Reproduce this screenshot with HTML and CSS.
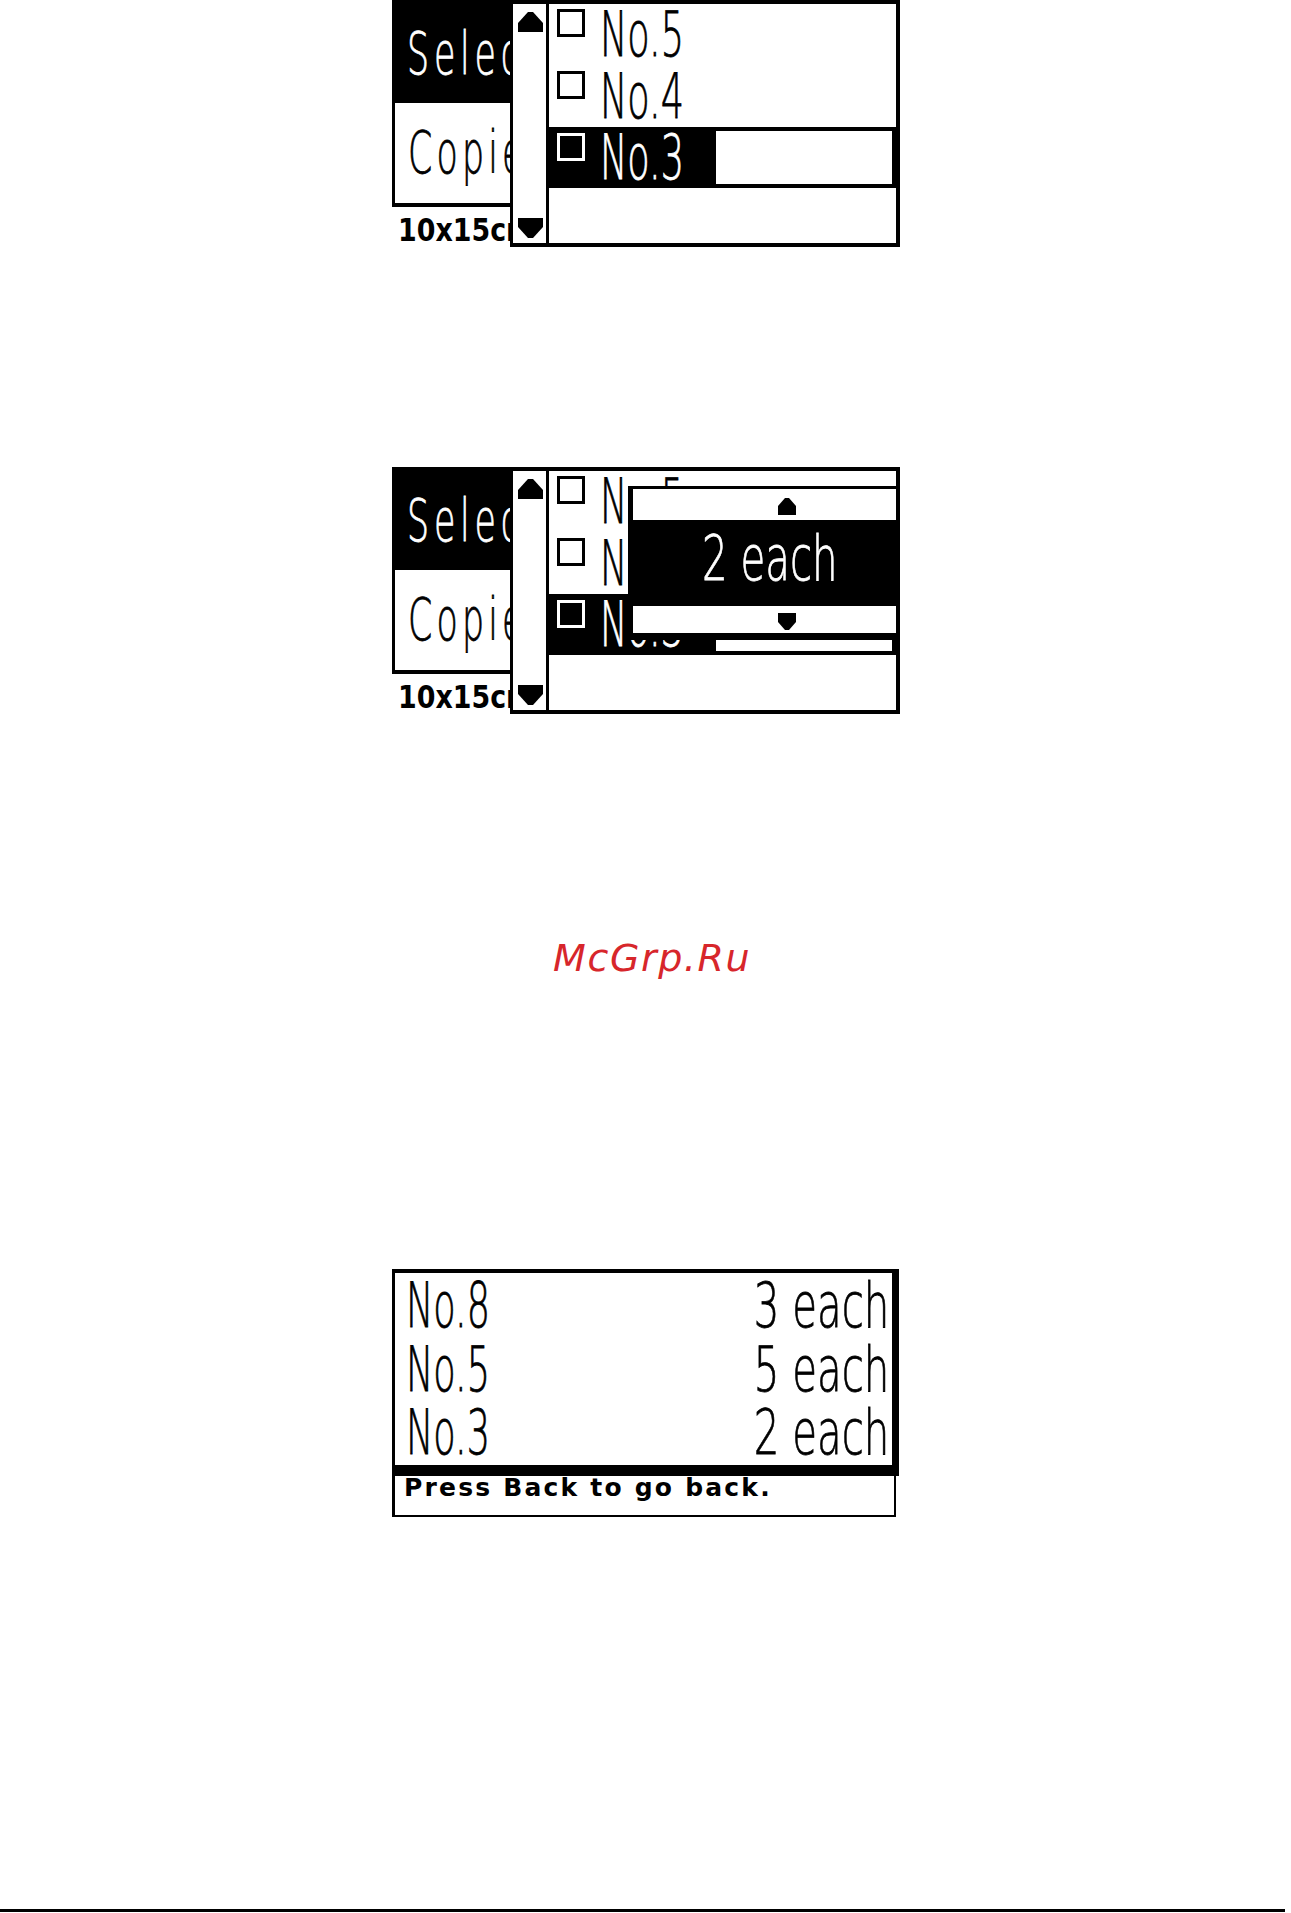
FILE: index.html
```html
<!DOCTYPE html>
<html lang="en">
<head>
<meta charset="utf-8">
<title>Copies per photo</title>
<link rel="stylesheet" href="styles.css">
</head>
<body>
<main class="page">

  <section class="screen">
    <div class="panel">
      <div class="panel-head"><span class="lcd lcd-side">Select</span></div>
      <div class="panel-box"><span class="lcd lcd-side lcd-copies">Copies</span></div>
      <div class="panel-foot"><span class="small-lcd">10x15cm</span></div>
    </div>
    <div class="menu">
      <div class="scroll">
        <svg class="arrow-lg" viewBox="0 0 25 20"><polygon points="10,0 15,0 25,11 25,20 0,20 0,11"/></svg>
        <svg class="arrow-lg" viewBox="0 0 25 20"><polygon points="0,0 25,0 25,9 15,20 10,20 0,9"/></svg>
      </div>
      <div class="list">
        <div class="group">
          <div class="row"><span class="check"></span><span class="name"><span class="lcd lcd-name">No.5</span></span></div>
          <div class="row"><span class="check"></span><span class="name"><span class="lcd lcd-name">No.4</span></span></div>
        </div>
        <div class="row row-selected"><span class="check"></span><span class="name"><span class="lcd lcd-name">No.3</span></span><span class="row-fill"></span></div>
        <div class="row-empty"></div>
      </div>
    </div>
  </section>

  <section class="screen">
    <div class="panel">
      <div class="panel-head"><span class="lcd lcd-side">Select</span></div>
      <div class="panel-box"><span class="lcd lcd-side lcd-copies">Copies</span></div>
      <div class="panel-foot"><span class="small-lcd">10x15cm</span></div>
    </div>
    <div class="menu">
      <div class="scroll">
        <svg class="arrow-lg" viewBox="0 0 25 20"><polygon points="10,0 15,0 25,11 25,20 0,20 0,11"/></svg>
        <svg class="arrow-lg" viewBox="0 0 25 20"><polygon points="0,0 25,0 25,9 15,20 10,20 0,9"/></svg>
      </div>
      <div class="list">
        <div class="group">
          <div class="row"><span class="check"></span><span class="name"><span class="lcd lcd-name">No.5</span></span></div>
          <div class="row"><span class="check"></span><span class="name"><span class="lcd lcd-name">No.4</span></span></div>
        </div>
        <div class="row row-selected"><span class="check"></span><span class="name"><span class="lcd lcd-name">No.3</span></span><span class="row-fill"></span></div>
        <div class="row-empty"></div>
      </div>
    </div>
    <div class="spinner">
      <div class="spin-up"><svg class="arrow-sm" viewBox="0 0 18 17"><polygon points="7,0 11,0 18,8 18,17 0,17 0,8"/></svg></div>
      <div class="spin-value"><span class="lcd lcd-qty-left">2 each</span></div>
      <div class="spin-down"><svg class="arrow-sm" viewBox="0 0 18 17"><polygon points="0,0 18,0 18,9 11,17 7,17 0,9"/></svg></div>
    </div>
  </section>

  <p class="watermark">McGrp.Ru</p>

  <section class="summary">
    <div class="summary-list">
      <div class="sum-row"><span class="lcd lcd-name">No.8</span><span class="lcd lcd-qty">3 each</span></div>
      <div class="sum-row"><span class="lcd lcd-name">No.5</span><span class="lcd lcd-qty">5 each</span></div>
      <div class="sum-row"><span class="lcd lcd-name">No.3</span><span class="lcd lcd-qty">2 each</span></div>
    </div>
    <div class="status">Press Back to go back.</div>
  </section>

  <hr class="page-rule">
</main>
</body>
</html>
```

FILE: styles.css
```css
* {
  box-sizing: border-box;
  margin: 0;
  padding: 0;
}

html, body {
  background: #fff;
}

body {
  width: 1291px;
  height: 1913px;
  overflow: hidden;
  font-family: "DejaVu Sans", sans-serif;
  color: #000;
}

.page {
  display: flex;
  flex-direction: column;
  height: 1913px;
}

/* ---------- LCD type (tall, condensed display lettering) ---------- */
.lcd {
  display: inline-block;
  font-weight: 200;
  line-height: 0.9;
  white-space: nowrap;
  transform-origin: left top;
  -webkit-text-stroke: 0.4px currentColor;
}

.lcd-side {
  font-size: 19.33px;
  letter-spacing: 2.67px;
  transform: scale(1.8, 3);
  -webkit-text-stroke: 0.27px currentColor;
}

.lcd-copies {
  letter-spacing: 2.33px;
}

.lcd-name {
  font-size: 31px;
  transform: scale(1.18, 2);
}

.lcd-qty,
.lcd-qty-left {
  font-size: 31px;
  transform: scale(1.3, 2);
}

.lcd-qty {
  transform-origin: right top;
}

.small-lcd {
  display: inline-block;
  font-size: 16px;
  font-weight: bold;
  line-height: 1;
  white-space: nowrap;
  transform: scale(1.68, 2);
  transform-origin: left top;
}

/* ---------- selection screens ---------- */
.screen {
  position: relative;
  display: flex;
  width: 508px;
  height: 247px;
  margin-left: 392px;
  flex: none;
}

.screen + .screen {
  margin-top: 220px;
}

.panel {
  flex: none;
  width: 118px;
  overflow: hidden;
  display: flex;
  flex-direction: column;
}

.panel-head {
  height: 103px;
  background: #000;
  color: #fff;
  padding: 29px 0 0 15px;
}

.panel-box {
  height: 104px;
  border-left: 3px solid #000;
  border-bottom: 4px solid #000;
  padding: 25px 0 0 13px;
}

.panel-foot {
  height: 40px;
  padding: 6px 0 0 6px;
}

.menu {
  flex: none;
  width: 390px;
  height: 247px;
  background: #000;
  display: flex;
  gap: 3px;
  padding: 4px 4px 4px 3px;
}

.scroll {
  width: 33px;
  flex: none;
  background: #fff;
  display: flex;
  flex-direction: column;
  justify-content: space-between;
  align-items: center;
  padding: 8px 0 5px 2px;
}

.arrow-lg {
  display: block;
  width: 25px;
  height: 20px;
  fill: #000;
}

.arrow-sm {
  display: block;
  width: 18px;
  height: 17px;
  fill: #000;
}

.list {
  flex: 1;
  display: flex;
  flex-direction: column;
}

.group {
  height: 123px;
  background: #fff;
  display: flex;
  flex-direction: column;
}

.row {
  display: flex;
  align-items: flex-start;
  height: 61.5px;
  padding-left: 8px;
}

.check {
  flex: none;
  width: 28px;
  height: 28px;
  border: 3px solid #000;
  margin-top: 5px;
}

.name {
  flex: none;
  width: 100px;
  margin: 4px 0 0 15px;
}

.row-selected {
  height: 54px;
  margin-top: 4px;
  background: #000;
  color: #fff;
}

.row-selected .check {
  border-color: #fff;
  margin-top: 2px;
}

.row-selected .name {
  margin-top: 0;
}

.row-fill {
  flex: none;
  width: 176px;
  height: 53px;
  margin-left: auto;
  margin-right: 4px;
  background: #fff;
}

.row-empty {
  flex: 1;
  margin-top: 3px;
  background: #fff;
}

/* quantity spinner (pops up over the list) */
.spinner {
  position: absolute;
  left: 236px;
  top: 19px;
  width: 272px;
  height: 154px;
  background: #000;
  padding: 3px 4px 7px 5px;
  display: flex;
  flex-direction: column;
}

.spin-up {
  height: 31px;
  background: #fff;
  padding: 9px 0 0 145px;
}

.spin-value {
  height: 86px;
  color: #fff;
  padding: 12px 0 0 69px;
}

.spin-down {
  flex: 1;
  background: #fff;
  padding: 7px 0 0 145px;
}

/* ---------- watermark ---------- */
.watermark {
  margin-top: 224.5px;
  padding-left: 553px;
  height: 38px;
  font-family: "DejaVu Sans", sans-serif;
  font-style: italic;
  font-size: 38px;
  line-height: 1;
  letter-spacing: 1.6px;
  color: #d7262b;
}

/* ---------- summary screen ---------- */
.summary {
  margin-top: 292.5px;
  margin-left: 392px;
  width: 507px;
  flex: none;
}

.summary-list {
  height: 207px;
  border: solid #000;
  border-width: 4px 7px 11px 3px;
  display: flex;
  flex-direction: column;
}

.sum-row {
  display: flex;
  justify-content: space-between;
  align-items: flex-start;
  height: 63.5px;
  padding: 6px 3px 0 11px;
}

.status {
  width: 504px;
  height: 41px;
  border: solid #000;
  border-width: 0 2px 2px 3px;
  padding: 0 0 0 9px;
  font-size: 25px;
  font-weight: bold;
  line-height: 0.95;
  letter-spacing: 2.2px;
  white-space: nowrap;
}

/* ---------- page rule ---------- */
.page-rule {
  margin-top: 392px;
  height: 3px;
  width: 1285px;
  border: none;
  background: #000;
  flex: none;
}
```
